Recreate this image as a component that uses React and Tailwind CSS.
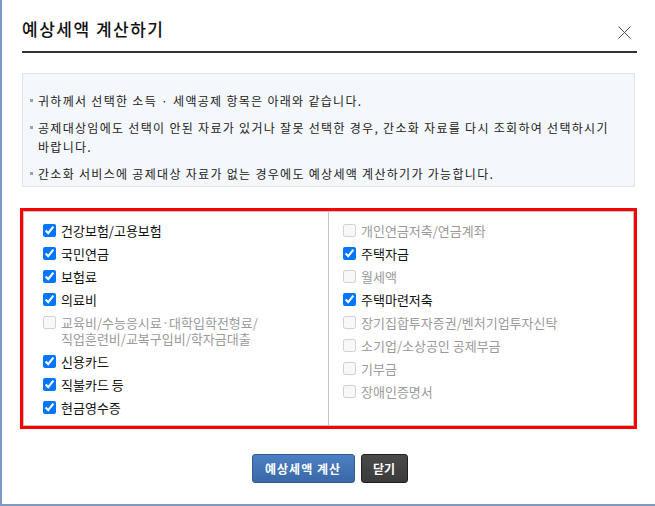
import React from 'react';

const leftItems = [
  { label: '건강보험/고용보험', checked: true },
  { label: '국민연금', checked: true },
  { label: '보험료', checked: true },
  { label: '의료비', checked: true },
  { label: '교육비/수능응시료·대학입학전형료/\n직업훈련비/교복구입비/학자금대출', checked: false },
  { label: '신용카드', checked: true },
  { label: '직불카드 등', checked: true },
  { label: '현금영수증', checked: true },
];

const rightItems = [
  { label: '개인연금저축/연금계좌', checked: false },
  { label: '주택자금', checked: true },
  { label: '월세액', checked: false },
  { label: '주택마련저축', checked: true },
  { label: '장기집합투자증권/벤처기업투자신탁', checked: false },
  { label: '소기업/소상공인 공제부금', checked: false },
  { label: '기부금', checked: false },
  { label: '장애인증명서', checked: false },
];

const notices = [
  '귀하께서 선택한 소득 · 세액공제 항목은 아래와 같습니다.',
  '공제대상임에도 선택이 안된 자료가 있거나 잘못 선택한 경우, 간소화 자료를 다시 조회하여 선택하시기 바랍니다.',
  '간소화 서비스에 공제대상 자료가 없는 경우에도 예상세액 계산하기가 가능합니다.',
];

function CheckItem({ label, checked }) {
  return (
    <label className="flex items-start gap-[5px]">
      <input
        type="checkbox"
        defaultChecked={checked}
        disabled={!checked}
        className="mt-[1px] h-[13px] w-[13px] shrink-0"
      />
      <span
        className={
          'whitespace-pre-line text-[13px] leading-[16px] ' +
          (checked ? 'text-[#111]' : 'text-[#9a9a9a]')
        }
      >
        {label}
      </span>
    </label>
  );
}

export default function App() {
  return (
    <div
      className="h-[506px] w-[655px] border-l-2 border-b-2 border-[#7b9bc6] bg-white pl-[20px] pr-[18px]"
      style={{ fontFamily: '"Noto Sans CJK KR", "Noto Sans", sans-serif' }}
    >
      <div className="flex h-[53px] items-start justify-between border-b-2 border-[#333] pt-[18px]">
        <h1 className="text-[17px] leading-[22px] font-medium tracking-[1.5px] text-[#111]">예상세액 계산하기</h1>
        <button className="mt-[8px] mr-[6px] text-[#555]">
          <svg width="13" height="13" viewBox="0 0 13 13" fill="none" stroke="#4a5068" strokeWidth="1">
            <path d="M0.5 0.5 L12.5 12.5 M12.5 0.5 L0.5 12.5" />
          </svg>
        </button>
      </div>

      <div className="mt-[20px] mr-[2px] border border-[#dfe5ee] bg-[#f4f7fb] pt-[17px] pb-[3px] pl-[7px] pr-[14px]">
        <ul className="flex flex-col gap-[8px]">
          {notices.map(n => (
            <li key={n} className="flex text-[12px] leading-[19px] tracking-[1.3px] text-[#222]">
              <span className="mt-[8px] mr-[5px] h-[3px] w-[3px] shrink-0 bg-[#a0a0a0]"></span>
              <span>{n}</span>
            </li>
          ))}
        </ul>
      </div>

      <div className="mt-[21px] -ml-[2px] border-[3px] border-[#ff0000]">
        <div className="grid grid-cols-[305px_1fr] border border-[#c4c4c4]">
          <div className="flex flex-col gap-[7px] border-r border-[#c4c4c4] pt-[11px] pb-[9px] pl-[19px]">
            {leftItems.map(i => (
              <CheckItem key={i.label} {...i} />
            ))}
          </div>
          <div className="flex flex-col gap-[7px] pt-[11px] pb-[9px] pl-[14px]">
            {rightItems.map(i => (
              <CheckItem key={i.label} {...i} />
            ))}
          </div>
        </div>
      </div>

      <div className="mt-[25px] flex justify-center gap-[6px]">
        <button className="h-[29px] w-[103px] rounded-[3px] border border-[#2f5b96] bg-gradient-to-b from-[#4c80c2] to-[#3a68a8] text-[12px] font-bold text-white tracking-[1px]">
          예상세액 계산
        </button>
        <button className="h-[29px] w-[47px] rounded-[3px] border border-[#1f1f1f] bg-gradient-to-b from-[#4a4a4a] to-[#3a3a3a] text-[12px] font-bold text-white">
          닫기
        </button>
      </div>
    </div>
  );
}
